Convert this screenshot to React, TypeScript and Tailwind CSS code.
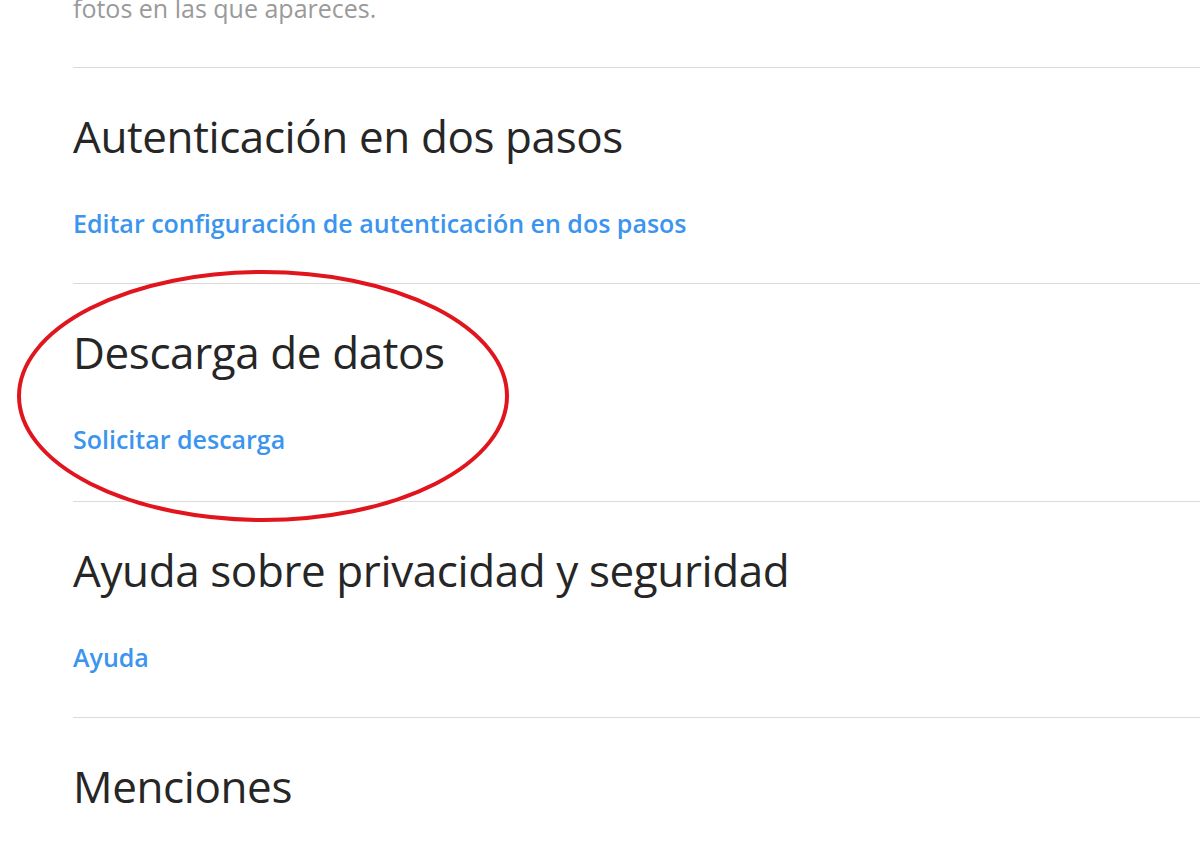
const SECTIONS = [
  {
    title: "Autenticación en dos pasos",
    link: "Editar configuración de autenticación en dos pasos",
    pad: "pb-[47px]",
  },
  { title: "Descarga de datos", link: "Solicitar descarga", pad: "pb-[49px]" },
  {
    title: "Ayuda sobre privacidad y seguridad",
    link: "Ayuda",
    pad: "pb-[47px]",
  },
];

export default function App() {
  return (
    <div className="relative h-[850px] w-[1200px] overflow-hidden bg-white font-['Open_Sans',sans-serif]">
      <div className="pl-[73px]">
        <p className="-mt-[8px] h-[75px] text-[25px] leading-[32px] text-[#9a9a9a]">
          fotos en las que apareces.
        </p>

        {SECTIONS.map((s) => (
          <section
            key={s.title}
            className={`border-t border-[#dbdbdb] pt-[46px] ${s.pad}`}
          >
            <h2 className="text-[44px] leading-none font-normal tracking-[-0.4px] text-[#262626]">
              {s.title}
            </h2>
            <a
              href="#"
              className="mt-[53px] block text-[25px] leading-none font-semibold text-[#3b95ee]"
            >
              {s.link}
            </a>
          </section>
        ))}

        <section className="border-t border-[#dbdbdb] pt-[46px]">
          <h2 className="text-[44px] leading-none font-normal tracking-[-0.4px] text-[#262626]">
            Menciones
          </h2>
        </section>
      </div>

      {/* red marker circle drawn over the screenshot */}
      <svg
        className="pointer-events-none absolute left-0 top-0"
        width="1200"
        height="850"
        viewBox="0 0 1200 850"
      >
        <ellipse
          cx="263"
          cy="396"
          rx="244"
          ry="124"
          fill="none"
          stroke="#e0151d"
          strokeWidth="4"
        />
      </svg>
    </div>
  );
}
